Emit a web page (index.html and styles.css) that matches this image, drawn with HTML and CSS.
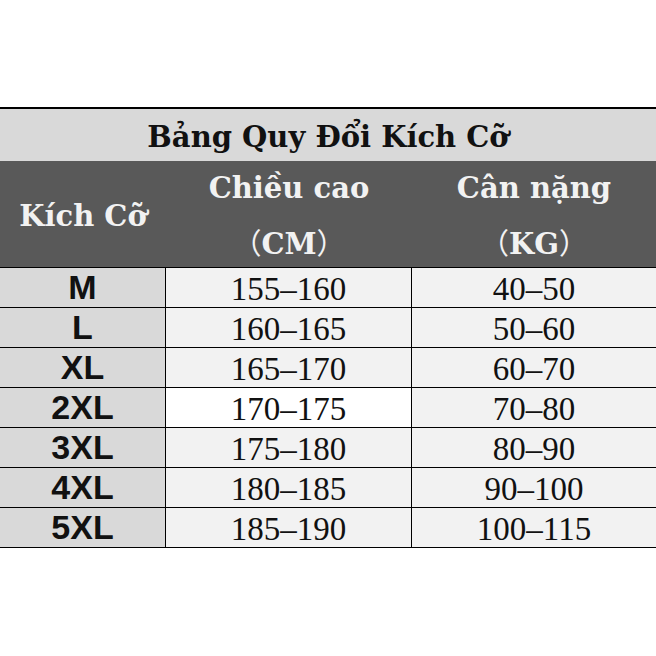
FILE: index.html
```html
<!DOCTYPE html>
<html lang="vi">
<head>
<meta charset="utf-8">
<title>Bảng Quy Đổi Kích Cỡ</title>
<link rel="stylesheet" href="styles.css">
</head>
<body>
<div class="chart">
  <div class="title">Bảng Quy Đổi Kích Cỡ</div>
  <div class="head">
    <div class="hcell"><span>Kích Cỡ</span></div>
    <div class="hcell two"><span>Chiều cao</span><span><span class="paren">（</span>CM<span class="paren">）</span></span></div>
    <div class="hcell two"><span>Cân nặng</span><span><span class="paren">（</span>KG<span class="paren">）</span></span></div>
  </div>
  <div class="row"><div class="size">M</div><div class="num">155–160</div><div class="num">40–50</div></div>
  <div class="row"><div class="size">L</div><div class="num">160–165</div><div class="num">50–60</div></div>
  <div class="row"><div class="size">XL</div><div class="num">165–170</div><div class="num">60–70</div></div>
  <div class="row"><div class="size">2XL</div><div class="num white">170–175</div><div class="num">70–80</div></div>
  <div class="row"><div class="size">3XL</div><div class="num">175–180</div><div class="num">80–90</div></div>
  <div class="row"><div class="size">4XL</div><div class="num">180–185</div><div class="num">90–100</div></div>
  <div class="row last"><div class="size">5XL</div><div class="num">185–190</div><div class="num">100–115</div></div>
</div>
</body>
</html>
```

FILE: styles.css
```css
html, body {
  margin: 0;
  padding: 0;
  background: #ffffff;
}

.chart {
  margin-top: 107px;
  width: 656px;
}

.title {
  border-top: 2px solid #000;
  height: 50px;
  padding-top: 2px;
  line-height: 52px;
  overflow: hidden;
  background: #d9d9d9;
  color: #111;
  text-align: center;
  font-family: "DejaVu Serif", "Liberation Serif", serif;
  font-weight: bold;
  font-size: 29px;
}

.head {
  display: grid;
  grid-template-columns: 166px 246px 1fr;
  height: 106px;
  background: #595959;
  color: #f2f2f2;
  font-family: "DejaVu Serif", "Liberation Serif", serif;
  font-weight: bold;
  font-size: 29px;
}

.hcell {
  display: flex;
  flex-direction: column;
  align-items: center;
  justify-content: center;
  line-height: 53px;
  padding-top: 4px;
  box-sizing: border-box;
  overflow: hidden;
}

.paren {
  font-family: "Noto Sans CJK JP", sans-serif;
  font-weight: 400;
}

.row {
  display: grid;
  grid-template-columns: 166px 246px 1fr;
  grid-template-rows: 39px;
  height: 39px;
  border-top: 1px solid #000;
}

.row.last {
  border-bottom: 1px solid #000;
}

.size {
  background: #d9d9d9;
  border-right: 1px solid #000;
  text-align: center;
  font-family: "Liberation Sans", Arial, sans-serif;
  font-weight: bold;
  font-size: 34px;
  line-height: 39px;
  overflow: hidden;
  color: #111;
}

.num {
  background: #f2f2f2;
  text-align: center;
  font-family: "Liberation Serif", "Times New Roman", serif;
  font-size: 33px;
  line-height: 36px;
  padding-top: 3px;
  overflow: hidden;
  color: #111;
}

.num.white {
  background: #ffffff;
}

.row .num:nth-child(2) {
  border-right: 1px solid #000;
}
```
